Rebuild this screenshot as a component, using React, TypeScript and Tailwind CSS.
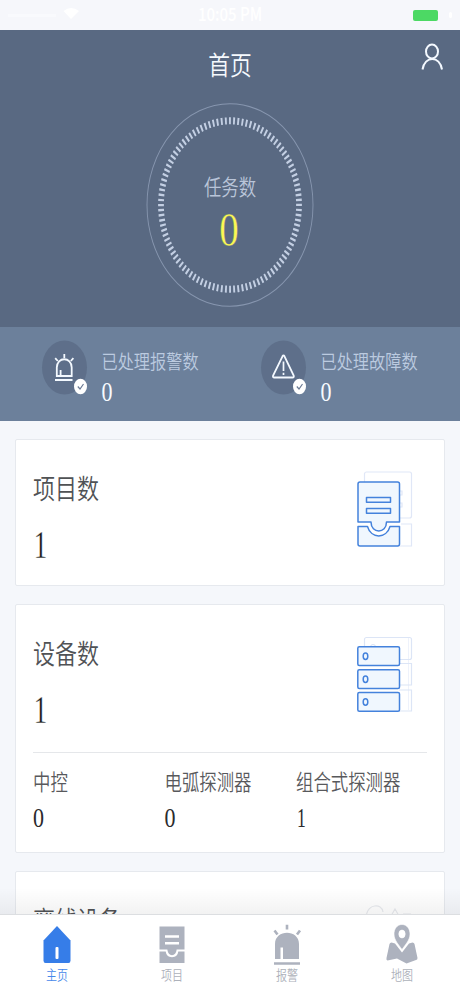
import clsx from 'clsx';
import type { ReactNode } from 'react';

const Txt = ({ className, children }: { className?: string; children: ReactNode }) => (
  <span className={clsx('block w-fit whitespace-nowrap scale-y-[1.22]', className)}>{children}</span>
);

// large digits get a stroke in the colour of the surface below, which thins the serif
const Num = ({ className, children }: { className?: string; children: ReactNode }) => (
  <span
    className={clsx(
      "block w-fit font-[family-name:'Liberation_Serif',serif] font-normal",
      children === 1 ? 'scale-x-[0.8] scale-y-[1.22]' : 'scale-y-[1.22]',
      className
    )}
  >
    {children}
  </span>
);

const StatusBar = () => (
  <div className="flex h-[30px] shrink-0 items-center justify-between bg-[#f6f7fb] text-white">
    <svg width="90" height="30" viewBox="0 0 90 30" fill="none">
      <path d="M8 15.5H56" stroke="#f9fafd" strokeWidth="3" />
      <path d="M63.500 11Q71 5 79 11L71 19Z" fill="#fff" />
    </svg>
    <Txt className="pb-[2px] text-[15px] leading-[28px] font-medium">10:05 PM</Txt>
    <div className="flex w-[90px] items-center justify-end pr-[8px]">
      <div className="mr-[11px] h-[11px] w-[25px] rounded-[2px] bg-[#4cd964]" />
      <div className="h-[6px] w-[3px] rounded-sm bg-white" />
    </div>
  </div>
);

const TaskRing = () => (
  <div className="relative mx-auto h-[206px] w-[170px]">
    <svg className="absolute inset-0" width="170" height="206" viewBox="0 0 170 206" fill="none">
      <g transform="translate(85 103) scale(1 1.22)">
        <circle r="83" stroke="#8796af" strokeWidth="0.9" />
        <circle r="69" stroke="#c3cfe3" strokeWidth="5.800" pathLength="10400" strokeDasharray="45 55" transform="rotate(-90.800)" />
      </g>
    </svg>
    <div className="relative flex flex-col items-center pt-[72px]">
      <Txt className="text-[17.400px] leading-[24px] text-[#b9c5d9]">任务数</Txt>
      <Num className="mt-[8px] -ml-[2px] text-[39px] leading-[48px] text-[#fbf853] [-webkit-text-stroke:0.3px_#596982]">{0}</Num>
    </div>
  </div>
);

const Badge = () => (
  <g>
    <ellipse cx="39.500" cy="46.500" rx="6.500" ry="7.800" fill="#fff" />
    <path d="M36.800 46.500L39 49L42.500 44" stroke="#6b7a94" strokeWidth="1.200" />
  </g>
);

const AlarmDone = () => (
  <svg width="48" height="56" viewBox="0 0 48 56" fill="none">
    <ellipse cx="23.500" cy="27.500" rx="22.500" ry="27" fill="#5e6f8a" />
    <g stroke="#f4f9ff" strokeWidth="1.800">
      <path d="M15.800 36V27.500C15.800 16.500 30.700 16.500 30.700 27.500V36Z" />
      <path d="M19.600 36V30M14 40H31.500M23.300 14V18M14.200 18.200L16.800 21M32.400 18.200L29.800 21" />
    </g>
    <Badge />
  </svg>
);

const FaultDone = () => (
  <svg width="48" height="56" viewBox="0 0 48 56" fill="none">
    <ellipse cx="23.500" cy="27.500" rx="22.500" ry="27" fill="#5e6f8a" />
    <path d="M22.500 16.300Q23.500 14.500 24.500 16.300L33.700 35.500Q34.300 37.500 32.500 37.500H14.300Q12.500 37.500 13.100 35.500Z" stroke="#f4f9ff" strokeWidth="1.800" />
    <path d="M23.500 21.500V31M23.500 32.800V35" stroke="#f4f9ff" strokeWidth="1.700" />
    <Badge />
  </svg>
);

const Handled = ({ icon, label, value }: { icon: ReactNode; label: string; value: number }) => (
  <div className="flex pt-[13px]">
    {icon}
    <div className="pl-[12.500px] pt-[8px]">
      <Txt className="text-[16.200px] leading-[24px] text-[#bccbe0]">{label}</Txt>
      <Num className="mt-[6px] text-[22px] leading-[28px] text-[#f7fbff]">{value}</Num>
    </div>
  </div>
);

const ProjectArt = () => (
  <svg width="56" height="76" viewBox="0 0 56 76" fill="none">
    <g stroke="#e0e7f7" strokeWidth="1.200">
      <rect x="7.500" y="1" width="47" height="46" rx="2" />
      <path d="M44 53H54.500V75H40" />
      <path d="M43 20h2v4h-2M43 32h2v4h-2" />
    </g>
    <g stroke="#4482dc" strokeWidth="1.500" fill="#f0f7fe" strokeLinejoin="round">
      <path d="M3 11H40.500Q42.500 11 42.500 13V51H29.500C29.500 63 14 63 14 51H1V13Q1 11 3 11Z" />
      <path d="M1 55.500H10.500C14 68 29.500 68 33 55.500H42.500V73Q42.500 75 40.500 75H3Q1 75 1 73Z" />
      <path d="M9.500 26.500h24v4.800h-24zM9.500 37.500h24v4.800h-24z" />
    </g>
  </svg>
);

const DeviceArt = () => (
  <svg width="56" height="76" viewBox="0 0 56 76" fill="none">
    <g stroke="#dce5f6" strokeWidth="1.200">
      <rect x="7.500" y="1.500" width="47" height="22" rx="2" />
      <path d="M42 27.500H54.500V49H42M42 54H54.500V75H42" />
      <path d="M51.500 2V74" strokeWidth="0.500" />
      <ellipse cx="16" cy="11.500" rx="2.500" ry="3" />
    </g>
    {[10.800, 33.700, 56.500].map((y) => (
      <g key={y} stroke="#4482dc" strokeWidth="1.500" fill="#f0f7fe">
        <rect x="0.800" y={y} width="41.700" height="18.700" rx="1.500" />
        <ellipse cx="8.500" cy={y + 9.500} rx="2.300" ry="3.200" />
      </g>
    ))}
  </svg>
);

const Card = ({ title, value, art, children }: { title: string; value?: number; art?: ReactNode; children?: ReactNode }) => (
  <section className="rounded-[2px] border border-[#e6e9ee] bg-white px-[17px]">
    <div className="flex h-[145px] justify-between">
      <div className="pt-[31px]">
        <Txt className="text-[22px] leading-[32px] text-[#505255]">{title}</Txt>
        <Num className="mt-[22px] -ml-[1px] text-[33.500px] leading-[40px] text-[#1b1b1d] [-webkit-text-stroke:0.25px_#ffffff]">{value}</Num>
      </div>
      <div className="pr-[14px] pt-[31px]">{art}</div>
    </div>
    {children}
  </section>
);

const devices = [
  { label: '中控', value: 0 },
  { label: '电弧探测器', value: 0 },
  { label: '组合式探测器', value: 1 },
];

const HomeIcon = () => (
  <svg width="32" height="42" viewBox="0 0 32 42">
    <path d="M16 2L29.500 16.500V36.500Q29.500 39 27.500 39H4.500Q2.500 39 2.500 36.500V16.500Z" fill="#367de8" />
    <rect x="14.500" y="23" width="3" height="12" rx="1" fill="#fff" />
  </svg>
);

const ProjectIcon = () => (
  <svg width="32" height="42" viewBox="0 0 32 42" fill="none">
    <path d="M3.500 2.500H28.500V39H3.500Z" fill="#adb2be" />
    <path d="M9 12.500H23M9 19.200H23" stroke="#fff" strokeWidth="2.500" />
    <path d="M3 26.500H10.500C11.500 34 20.500 34 21.500 26.500H29" stroke="#fff" strokeWidth="2" />
  </svg>
);

const AlarmIcon = () => (
  <svg width="32" height="42" viewBox="0 0 32 42" fill="none">
    <path d="M4 35V20C4 5 28 5 28 20V35H12V23.500H9.500V35Z" fill="#adb2be" />
    <path d="M3 39.500H29M16 0.800V5.500M3.500 6.500L6.500 10.500M29 6.500L26 10.500" stroke="#adb2be" strokeWidth="2.600" />
  </svg>
);

const MapIcon = () => (
  <svg width="32" height="42" viewBox="0 0 32 42">
    <path d="M5.500 18.500L9 19.500L16 28.500L23 19.500L26.500 18.500Q28 18.500 28.500 20L31.500 34Q31.500 36 30 36L20.500 39.500L11 34.500L1.500 36.500Q0 36 0.500 34L3.500 20Q4 18.500 5.500 18.500Z" fill="#adb2be" />
    <path
      fillRule="evenodd"
      d="M16 0.500C11 0.500 8 5 8 10C8 16 12.500 20.500 16 25.500C19.500 20.500 24 16 24 10C24 5 21 0.500 16 0.500ZM16 6A3.200 4 0 1 1 16 14A3.200 4 0 1 1 16 6Z"
      fill="#adb2be"
      stroke="#fff"
      strokeWidth="0.600"
    />
  </svg>
);

const tabs = [
  { label: '主页', icon: <HomeIcon />, active: true },
  { label: '项目', icon: <ProjectIcon /> },
  { label: '报警', icon: <AlarmIcon /> },
  { label: '地图', icon: <MapIcon /> },
];

export default function App() {
  return (
    <div className="flex h-[996px] w-[460px] flex-col overflow-hidden bg-[#f5f7fb] font-[family-name:'Noto_Sans_CJK_SC',sans-serif] font-[350]">
      <StatusBar />

      <header className="h-[297px] shrink-0 bg-[#596982]">
        <div className="grid h-[72px] grid-cols-[60px_1fr_60px]">
          <Txt className="col-start-2 mx-auto mt-[18px] h-[32px] text-[21.800px] leading-[32px] text-[#f6fafe]">首页</Txt>
          <svg className="mt-[12px] ml-[20px]" width="24" height="30" viewBox="0 0 24 30" fill="none" stroke="#f4f9ff" strokeWidth="2">
            <ellipse cx="12" cy="9.500" rx="6" ry="7" />
            <path d="M2.500 27.500C4.500 13.500 20 13.500 22 27.500" />
          </svg>
        </div>
        <TaskRing />
      </header>

      <div className="grid h-[94px] shrink-0 grid-cols-[219px_1fr] bg-[#6c809b] pl-[41px]">
        <Handled icon={<AlarmDone />} label="已处理报警数" value={0} />
        <Handled icon={<FaultDone />} label="已处理故障数" value={0} />
      </div>

      <main className="relative flex min-h-0 flex-1 flex-col gap-[18px] overflow-hidden px-[15px] pt-[18px]">
        <Card title="项目数" value={1} art={<ProjectArt />} />
        <Card title="设备数" value={1} art={<DeviceArt />}>
          <div className="mt-[2px] grid h-[100px] grid-cols-[131.500px_131.500px_1fr] border-t border-[#e5e7ea] pt-[16px]">
            {devices.map((d) => (
              <div key={d.label}>
                <Txt className="text-[17.400px] leading-[24px] text-[#58595c]">{d.label}</Txt>
                <Num className="mt-[11px] text-[22px] leading-[28px] text-[#2a2a2c]">{d.value}</Num>
              </div>
            ))}
          </div>
        </Card>
        <Card
          title="离线设备"
          art={
            <svg width="56" height="76" viewBox="0 0 56 76" fill="none" stroke="#e8eaee" strokeWidth="1.200">
              <path d="M9 15C10 0 25 0 26 9M34 13L38 6L42 13M46 11H54" />
            </svg>
          }
        />
        <div className="absolute inset-x-0 bottom-0 h-[26px] bg-gradient-to-b from-transparent to-black/5" />
      </main>

      <nav className="grid h-[82px] shrink-0 grid-cols-4 border-t border-[#dcdee1] bg-white">
        {tabs.map((t) => (
          <div key={t.label} className="-ml-px flex flex-col items-center pt-[9px]">
            {t.icon}
            <Txt className={clsx('-mt-px text-[11px] leading-[18px]', t.active ? 'text-[#4688ea]' : 'text-[#adb1ba]')}>{t.label}</Txt>
          </div>
        ))}
      </nav>
    </div>
  );
}
